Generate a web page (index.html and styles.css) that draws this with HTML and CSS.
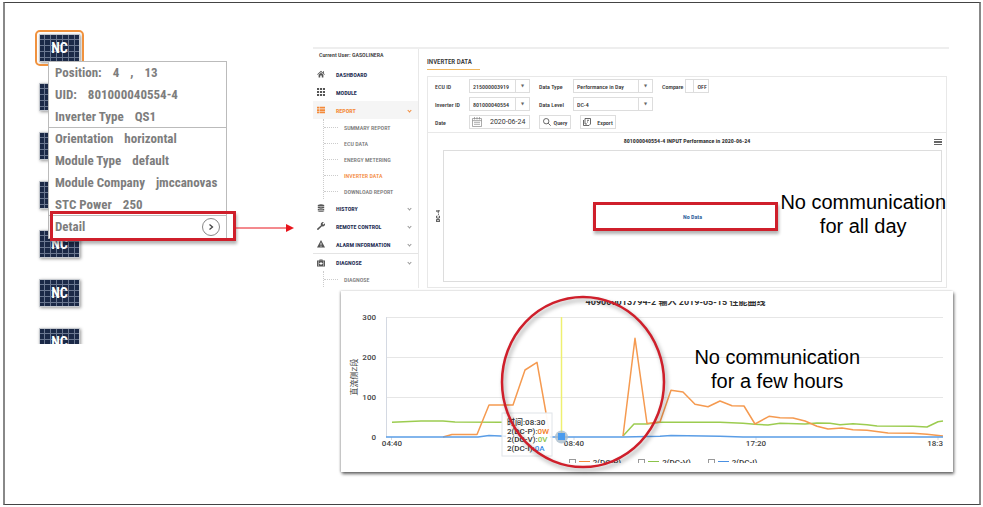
FILE: index.html
```
<!DOCTYPE html>
<html lang="en">
<head>
<title>Inverter Data</title>
<meta charset="UTF-8">
<link rel="stylesheet" href="styles.css">
</head>
<body>
<main class="slide">

  <!-- module map with the pop-up of the selected module -->
  <section class="array">
    <div class="tiles">
      <div class="tile selected">NC</div>
      <div class="tile"></div>
      <div class="tile"></div>
      <div class="tile"></div>
      <div class="tile">NC</div>
      <div class="tile">NC</div>
      <div class="tile">NC</div>
    </div>
    <div class="popup">
      <ul>
        <li>Position:<span>4</span><span>,</span><span>13</span></li>
        <li>UID:<span>801000040554-4</span></li>
        <li>Inverter Type<span>QS1</span></li>
      </ul>
      <ul>
        <li>Orientation<span>horizontal</span></li>
        <li>Module Type<span>default</span></li>
        <li>Module Company<span>jmccanovas</span></li>
        <li>STC Power<span>250</span></li>
      </ul>
      <button class="detail" type="button">Detail
        <svg width="20" height="20" viewBox="0 0 20 20">
          <circle cx="10" cy="10" r="8.5" fill="#fff" stroke="#888" stroke-width="1"/>
          <path d="M8.5 7.5 L11.5 10 L8.5 12.5" fill="none" stroke="#444" stroke-width="1.3"/>
        </svg>
      </button>
      <div class="mark mark-detail"></div>
      <svg class="arrow" width="59" height="8" viewBox="0 0 59 8">
        <path d="M0 4 H52" stroke="#e8141c" stroke-width="1"/>
        <path d="M51 0 L59 4 L51 8 Z" fill="#e8141c"/>
      </svg>
    </div>
  </section>

  <div class="right">
    <section class="tool">
      <nav class="sidebar">
        <p class="user">Current User: GASOLINERA</p>
        <a class="item" href="#">
          <svg viewBox="0 0 10 10"><path d="M0 5.5 L5 1 L10 5.5 L9 6 L5 2.6 L1 6 Z M2 6 L5 3.5 L8 6 V9.5 H6 V7 H4 V9.5 H2 Z M7.5 1.5 H8.7 V4 L7.5 3 Z"/></svg>
          DASHBOARD</a>
        <a class="item" href="#">
          <svg viewBox="0 0 10 10"><path d="M0 0 H2.6 V2.6 H0 Z M3.7 0 H6.3 V2.6 H3.7 Z M7.4 0 H10 V2.6 H7.4 Z M0 3.7 H2.6 V6.3 H0 Z M3.7 3.7 H6.3 V6.3 H3.7 Z M7.4 3.7 H10 V6.3 H7.4 Z M0 7.4 H2.6 V10 H0 Z M3.7 7.4 H6.3 V10 H3.7 Z M7.4 7.4 H10 V10 H7.4 Z"/></svg>
          MODULE</a>
        <a class="item open" href="#">
          <svg viewBox="0 0 10 10"><path d="M0 1 H3 V3.2 H0 Z M3.6 1 H10 V3.2 H3.6 Z M0 4 H3 V6.2 H0 Z M3.6 4 H10 V6.2 H3.6 Z M0 7 H3 V9.2 H0 Z M3.6 7 H10 V9.2 H3.6 Z"/></svg>
          REPORT<i class="chevron"></i></a>
        <div class="sub">
          <a href="#">SUMMARY REPORT</a>
          <a href="#">ECU DATA</a>
          <a href="#">ENERGY METERING</a>
          <a class="current" href="#">INVERTER DATA</a>
          <a href="#">DOWNLOAD REPORT</a>
        </div>
        <a class="item" href="#">
          <svg viewBox="0 0 10 10"><path d="M1 1.3 Q5 -.6 9 1.3 V2.4 Q5 4 1 2.4 Z M1 3.2 Q5 5 9 3.2 V5 Q5 6.6 1 5 Z M1 5.8 Q5 7.4 9 5.8 V7.4 Q5 9 1 7.4 Z M1 8.1 Q5 9.8 9 8.1 V9 Q5 10.8 1 9 Z"/></svg>
          HISTORY<i class="chevron"></i></a>
        <a class="item" href="#">
          <svg viewBox="0 0 10 10"><path d="M.4 8.2 L5 4 A2.7 2.7 0 0 1 8.6 .4 L7 2 L7.3 3 L8.3 3.1 L9.8 1.6 A2.7 2.7 0 0 1 6.2 5.2 L1.8 9.6 A.9 .9 0 0 1 .4 8.2 Z"/></svg>
          REMOTE CONTROL<i class="chevron"></i></a>
        <a class="item" href="#">
          <svg viewBox="0 0 10 10"><path fill-rule="evenodd" d="M5 0 L10 9.5 H0 Z M4.4 3.5 L4.6 6.6 H5.4 L5.6 3.5 Z M4.5 7.3 V8.4 H5.5 V7.3 Z"/></svg>
          ALARM INFORMATION<i class="chevron"></i></a>
        <a class="item ruled" href="#">
          <svg viewBox="0 0 10 10"><path fill-rule="evenodd" d="M3 2 V.6 H7 V2 H10 V9.4 H0 V2 Z M4 2 H6 V1.5 H4 Z M1.2 2.8 V8.6 H1.8 V2.8 Z M8.2 2.8 V8.6 H8.8 V2.8 Z M4.4 3.6 V5 H3 V6.2 H4.4 V7.6 H5.6 V6.2 H7 V5 H5.6 V3.6 Z"/></svg>
          DIAGNOSE<i class="chevron"></i></a>
        <div class="sub">
          <a href="#">DIAGNOSE</a>
        </div>
      </nav>

      <div class="content">
        <h1>INVERTER DATA</h1>
        <div class="panel">
          <form class="filters">
            <div class="row">
              <label for="ecu">ECU ID</label>
              <span class="pick"><select id="ecu"><option>215000003919</option></select></span>
              <label for="type">Data Type</label>
              <span class="pick wide"><select id="type"><option>Performance in Day</option></select></span>
              <label for="compare">Compare</label>
              <span class="toggle"><input type="checkbox" id="compare">OFF</span>
            </div>
            <div class="row">
              <label for="inverter">Inverter ID</label>
              <span class="pick"><select id="inverter"><option>801000040554</option></select></span>
              <label for="level">Data Level</label>
              <span class="pick wide"><select id="level"><option>DC-4</option></select></span>
            </div>
            <div class="row">
              <label for="date">Date</label>
              <span class="date">
                <svg width="10" height="10" viewBox="0 0 10 10" fill="none" stroke="#888" stroke-width=".7"><path d="M.5 1.5 H9.5 V9.5 H.5 Z M.5 3.6 H9.5 M2.5 0 V2.5 M5 0 V2.5 M7.5 0 V2.5 M2 5.3 H8 M2 7.3 H8"/></svg>
                <input type="text" id="date" value="2020-06-24">
              </span>
              <button type="button">
                <svg width="8" height="8" viewBox="0 0 8 8" fill="none" stroke="#444" stroke-width=".8"><circle cx="3.2" cy="3.2" r="2.7"/><path d="M5.2 5.2 L7.7 7.7"/></svg>
                Query</button>
              <button type="button" class="export">
                <svg width="8" height="8" viewBox="0 0 8 8" fill="none" stroke="#444" stroke-width=".8"><path d="M2 .5 H7.5 V6 L6 7.5 H.5 V2 M2 .5 V6 H4 M4 2.3 H6 M4 4 H5"/></svg>
                Export</button>
            </div>
          </form>
          <div class="chart-head">
            <h2>801000040554-4 INPUT Performance in 2020-06-24</h2>
            <button type="button" class="burger" aria-label="Chart menu"></button>
          </div>
          <div class="empty-chart">
            <span class="axis">DC-4</span>
            <div class="plot">
              No Data
              <div class="mark mark-empty"></div>
              <p class="note note-day">No communication<br>for all day</p>
            </div>
          </div>
        </div>
      </div>
    </section>

    <figure class="curve">
      <h2><span>409000013794-2 输入 2019-05-15 性能曲线</span></h2>
      <svg viewBox="0 0 612 148">
        <g stroke="#e6e6e6" stroke-width="1">
          <path d="M45 10.5 H602 M45 50.5 H602 M45 90.5 H602"/>
          <path d="M45.5 10 V130 M50.5 130 V133 M233 130 V133 M415 130 V133 M597 130 V133" stroke="#d4d9e2"/>
        </g>
        <g class="ticks">
          <text x="35" y="13" text-anchor="end">300</text>
          <text x="35" y="53" text-anchor="end">200</text>
          <text x="35" y="93" text-anchor="end">100</text>
          <text x="35" y="133" text-anchor="end">0</text>
          <text x="51" y="139" text-anchor="middle">04:40</text>
          <text x="233" y="139" text-anchor="middle">08:40</text>
          <text x="415" y="139" text-anchor="middle">17:20</text>
          <text x="602" y="139" text-anchor="end">18:3</text>
          <text class="ytitle" transform="translate(16 70) rotate(-90)" text-anchor="middle">直流侧Z段</text>
        </g>
        <path d="M220.5 10 V130" stroke="#eff070" stroke-width="1.5"/>
        <g fill="none" stroke-width="1.5" stroke-linejoin="round">
          <path stroke="#9ccc50" d="M51 115.3 L80 114 H102 L114 115 L161 115.3 M282 129 L293 117 H306 L319 115.3 H379 L402 116.3 L414 117.3 L427 118 L439 116.3 L464 117 L476 116 L489 116.3 L499 117.7 L512 116.7 L526 117.7 L536 119 L572 119.3 L586 120 L597 114.7 L602 114"/>
          <path stroke="#f59a50" d="M102 130 L111 127.5 H136 L148 98 H172 L184 63 L196 55.3 L205 106 M282 129 L294 31.3 L306 116.5 L319 115 L330 83.3 L342 85 L354 97.3 L367 99.7 L379 94 L391 98.7 L403 99 L414 117 L428 109.3 L439 110.7 L452 111 L464 114 L476 119.3 L487 122 L501 121 L512 122.7 L526 123.3 L547 126 L572 126.3 L586 127.3 L602 129"/>
          <path stroke="#f59a50" stroke-opacity=".3" d="M205 106 L209 130"/>
          <path stroke="#5a9de6" d="M45 130 H137 L148 128.6 L165 129.3 M209 130 H282 L319 129.3 L330 128.6 L379 129.3 L402 130 H602"/>
        </g>
        <circle cx="220.5" cy="130" r="6.5" fill="#a9bccb" fill-opacity=".8"/>
        <rect x="217" y="126" width="7" height="7" fill="#4a9bee"/>
        <g class="tip">
          <rect x="161" y="106" width="50" height="43" fill="#fff" fill-opacity=".8" stroke="#e0e4e8"/>
          <text x="166" y="118">时间:08:30</text>
          <text x="166" y="127">2(DC-P):<tspan fill="#f47a20">0W</tspan></text>
          <text x="166" y="135">2(DC-V):<tspan fill="#8bc34a">0V</tspan></text>
          <text x="166" y="144">2(DC-I):<tspan fill="#3a8ee6">0A</tspan></text>
        </g>
        <ellipse class="ring" cx="242" cy="75" rx="81" ry="85"/>
      </svg>
      <div class="legend">
        <label><input type="checkbox" checked><i class="power"></i>2(DC-P)</label>
        <label><input type="checkbox" checked><i class="volt"></i>2(DC-V)</label>
        <label><input type="checkbox" checked><i class="amp"></i>2(DC-I)</label>
      </div>
      <p class="note note-hours">No communication<br>for a few hours</p>
    </figure>
  </div>
</main>
</body>
</html>
```

FILE: styles.css
```
* {
    box-sizing: border-box;
}
body {
    margin: 0;
    padding: 2px 2px 2px 3px;
    background: #fff;
    font-family: "Roboto Condensed", Roboto, "Noto Sans CJK SC", sans-serif;
    font-size: 6px;
    color: #333;
}
h1, h2, p, ul, figure {
    margin: 0;
    padding: 0;
}
ul {
    list-style: none;
}
a {
    color: inherit;
    text-decoration: none;
}
button, input, select {
    margin: 0;
    padding: 0;
    border: 0;
    border-radius: 0;
    background: none;
    font: inherit;
    color: inherit;
    appearance: none;
}
.slide {
    display: grid;
    grid-template-columns: 308px 1fr;
    align-items: start;
    min-height: calc(100vh - 4px);
    padding-right: 26px;
    border: solid #888;
    border-width: 1px 2px;
    border-top-color: #444;
    border-bottom-color: #444;
}

/* red frames and captions laid over the screens */
.mark {
    position: absolute;
    border: 3px solid #cf1f2b;
    box-shadow: 1px 3px 3px rgba(0, 0, 0, .3);
}
.note {
    position: absolute;
    font: 20px/24px "Liberation Sans", sans-serif;
    text-align: center;
    white-space: nowrap;
    color: #000;
}

/* module map */
.array {
    position: relative;
}
.tiles {
    display: flex;
    flex-direction: column;
    gap: 21px;
    max-height: 341px;
    padding: 31px 34px 0;
    overflow: hidden;
}
.tile {
    flex: none;
    width: 41px;
    height: 28px;
    border: 1px solid #c4c8ce;
    background-color: #1b2947;
    background-image:
        linear-gradient(90deg, #6a7790 1px, transparent 1px),
        linear-gradient(#6a7790 1px, transparent 1px);
    background-size: 6px 6px;
    background-position: 4px 4px;
    box-shadow: 1px 1px 3px rgba(0, 0, 0, .4);
    font-size: 14px;
    font-weight: bold;
    line-height: 26px;
    text-align: center;
    color: #fff;
}
.selected {
    outline: 2px solid #f0923e;
    outline-offset: 2px;
    border-radius: 1px;
}
.popup {
    position: absolute;
    top: 58px;
    left: 43px;
    width: 179px;
    border: 1px solid #bbb;
    background: #fff;
    font-size: 13px;
    font-weight: bold;
    line-height: 22px;
    white-space: nowrap;
    color: #7d7d7d;
}
.popup li {
    padding-left: 6px;
}
.popup li span {
    margin-left: 11px;
}
.popup ul + ul, .detail {
    margin-top: -1px;
    border-top: 1px solid #bbb;
}
.detail {
    display: flex;
    align-items: center;
    justify-content: space-between;
    width: 100%;
    height: 23px;
    padding: 0 5px 0 6px;
}
.mark-detail {
    right: -10px;
    bottom: -3px;
    left: 1px;
    height: 30px;
}
.arrow {
    position: absolute;
    bottom: 6px;
    left: 186px;
}

/* web tool */
.right {
    padding-top: 44px;
}
.tool {
    display: flex;
    margin-right: 4px;
    border-top: 2px solid #eee;
}
.sidebar {
    width: 106px;
    border-right: 1px solid #e8e8e8;
    font-weight: bold;
}
.user {
    margin-bottom: 4px;
    padding-left: 6px;
    font-weight: 500;
    line-height: 12px;
}
.item {
    display: flex;
    align-items: center;
    gap: 11px;
    height: 18px;
    padding: 0 7px 0 4px;
    color: #1f2f55;
}
.item svg {
    width: 8px;
    height: 8px;
    fill: #555;
}
.item.open {
    background: #f5f5f5;
    color: #f48a3a;
}
.item.open svg {
    fill: #f48a3a;
}
.ruled {
    border-top: 1px solid #e4e4e4;
}
.chevron {
    width: 3px;
    height: 3px;
    margin-left: auto;
    border: solid #999;
    border-width: 0 1px 1px 0;
    transform: rotate(45deg);
}
.open .chevron {
    border-color: #f48a3a;
}
.sub {
    margin-left: 10px;
    border-left: 1px dotted #ccc;
    font-weight: 500;
    color: #777;
}
.sub a {
    display: flex;
    align-items: center;
    gap: 6px;
    height: 16px;
}
.sub a::before {
    content: "";
    width: 14px;
    border-top: 1px dotted #ccc;
}
.sub .current {
    color: #f48a3a;
}
.content {
    display: flex;
    flex: 1;
    flex-direction: column;
    align-items: flex-start;
    padding: 7px 2px 0 8px;
}
h1 {
    padding-right: 8px;
    border-bottom: 1px solid #f0b860;
    font-size: 7px;
    font-weight: 500;
    line-height: 13px;
}
.panel {
    align-self: stretch;
    margin-top: 6px;
    border: 1px solid #e8e8e8;
}
.filters {
    display: flex;
    flex-direction: column;
    gap: 4px;
    padding: 2px 7px 3px;
    border-bottom: 1px solid #e8e8e8;
    font-weight: 500;
}
.row {
    display: flex;
    align-items: center;
    height: 14px;
}
.row label {
    width: 34px;
}
.row span + label {
    margin-left: 9px;
}
.row .wide + label {
    width: auto;
    margin-right: 2px;
}
.pick, .date, .toggle, .filters button {
    display: flex;
    align-items: center;
    height: 14px;
    border: 1px solid #ddd;
}
.pick {
    width: 61px;
}
.wide {
    width: 80px;
}
.pick select {
    flex: 1;
    min-width: 0;
    height: 12px;
    padding-left: 3px;
}
.pick::after {
    content: "▼";
    width: 13px;
    border-left: 1px solid #ddd;
    font: 4px/12px "DejaVu Sans", sans-serif;
    text-align: center;
    color: #666;
}
.toggle {
    width: 24px;
}
.toggle input {
    width: 8px;
    height: 12px;
    margin-right: 3px;
    border-right: 1px solid #ddd;
}
.date {
    width: 61px;
    padding-left: 2px;
}
.date input {
    width: 45px;
    padding-left: 8px;
    font-family: Roboto, sans-serif;
    font-size: 7px;
    font-weight: normal;
}
.filters button {
    justify-content: center;
    gap: 3px;
    width: 32px;
    margin-left: 9px;
}
.filters .export {
    gap: 6px;
    width: 36px;
}
.chart-head {
    display: flex;
    align-items: center;
    height: 17px;
    padding: 0 4px;
}
.chart-head h2 {
    flex: 1;
    padding: 0 0 3px 8px;
    font-size: 6px;
    text-align: center;
}
.burger {
    width: 8px;
    height: 6px;
    border: solid #666;
    border-width: 1px 0;
    background: linear-gradient(#fff 1px, #666 1px, #666 3px, #fff 3px);
}
.empty-chart {
    display: flex;
    align-items: center;
    padding: 0 4px 5px 5px;
}
.axis {
    width: 10px;
    font-weight: bold;
    line-height: 10px;
    writing-mode: vertical-rl;
    transform: rotate(180deg);
}
.plot {
    position: relative;
    display: flex;
    flex: 1;
    align-items: center;
    justify-content: center;
    min-height: 132px;
    border: 1px solid #ddd;
    font-weight: bold;
    color: #3466a0;
}
.mark-empty {
    top: 51px;
    right: 163px;
    width: 185px;
    height: 29px;
}
.note-day {
    top: 39px;
    right: -5px;
}

/* day curve */
.curve {
    position: relative;
    margin: 3px 0 0 28px;
    padding: 10px 0 9px;
    background: #fff;
    box-shadow: 1px 2px 3px rgba(0, 0, 0, .6), -1px 0 2px rgba(0, 0, 0, .2);
}
.curve h2 {
    display: flex;
    align-items: flex-end;
    justify-content: center;
    height: 6px;
    padding-left: 57px;
    overflow: hidden;
    font: bold 9px/9px Roboto, "Noto Sans CJK SC", sans-serif;
}
.curve svg {
    position: relative;
    display: block;
    width: 100%;
    overflow: visible;
}
.ticks, .tip {
    font: 500 8px Roboto, "Noto Sans CJK SC", sans-serif;
    fill: #444;
}
.ytitle {
    font-weight: normal;
}
.tip text {
    fill: #333;
}
.ring {
    fill: none;
    stroke: #cf1f2b;
    stroke-width: 2.5px;
    filter: drop-shadow(2px 3px 2px rgba(0, 0, 0, .35));
}
.legend {
    display: flex;
    justify-content: center;
    gap: 17px;
    height: 8px;
    padding: 4px 0 0 32px;
    overflow: hidden;
    font: 500 8px/8px Roboto, sans-serif;
}
.legend label {
    display: flex;
    gap: 3px;
}
.legend input {
    width: 7px;
    height: 7px;
    border: 1px solid #999;
}
.legend i {
    width: 11px;
    height: 3px;
    border-bottom: 1px solid #f48a3a;
}
.legend .volt {
    border-color: #8bc34a;
}
.legend .amp {
    border-color: #4a90e2;
}
.note-hours {
    top: 54px;
    right: 93px;
}
```
